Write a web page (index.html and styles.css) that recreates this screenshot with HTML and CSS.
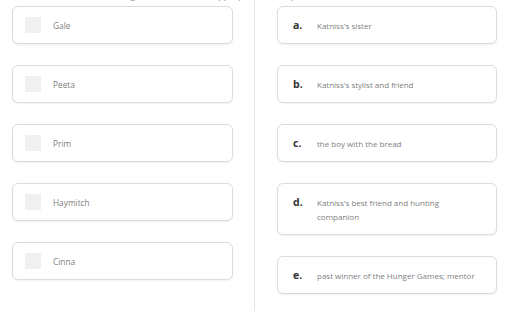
FILE: index.html
```html
<!DOCTYPE html>
<html lang="en">
<head>
    <meta charset="UTF-8">
    <meta name="viewport" content="width=device-width, initial-scale=1.0">
    <title>Match</title>
    <link rel="stylesheet" href="styles.css">
</head>
<body>
    <div class="prompt">Drag each name to the appropriate description.</div>

    <div class="board">
        <div class="column names">
            <div class="card"><span class="box"></span><span class="name">Gale</span></div>
            <div class="card"><span class="box"></span><span class="name">Peeta</span></div>
            <div class="card"><span class="box"></span><span class="name">Prim</span></div>
            <div class="card"><span class="box"></span><span class="name">Haymitch</span></div>
            <div class="card"><span class="box"></span><span class="name">Cinna</span></div>
        </div>

        <div class="divider"></div>

        <div class="column answers">
            <div class="card answer"><span class="letter">a.</span><span class="desc">Katniss's sister</span></div>
            <div class="card answer"><span class="letter">b.</span><span class="desc">Katniss's stylist and friend</span></div>
            <div class="card answer"><span class="letter">c.</span><span class="desc">the boy with the bread</span></div>
            <div class="card answer"><span class="letter">d.</span><span class="desc">Katniss's best friend and hunting companion</span></div>
            <div class="card answer"><span class="letter">e.</span><span class="desc">past winner of the Hunger Games; mentor</span></div>
        </div>
    </div>
</body>
</html>
```

FILE: styles.css
```css
body {
    margin: 0;
    background-color: #fff;
    font-family: 'Open Sans', sans-serif;
    overflow: hidden;
}

.prompt {
    height: 10px;
    overflow: hidden;
    margin-top: -9px;
    margin-bottom: -3px;
    font-size: 9px;
    line-height: 10px;
    color: #888;
    text-align: center;
    padding-right: 80px;
}

.board {
    display: flex;
    height: 313px;
    padding-top: 8px;
    box-sizing: border-box;
}

.column {
    display: flex;
    flex-direction: column;
    gap: 21px;
}

.names {
    width: 221px;
    margin-left: 12px;
}

.answers {
    width: 220px;
    margin-left: 22px;
}

.divider {
    width: 1px;
    background-color: #e4e4e4;
    margin-left: 21px;
    margin-top: -8px;
}

.card {
    display: flex;
    align-items: center;
    min-height: 38px;
    box-sizing: border-box;
    border: 1px solid #dcdcdc;
    border-radius: 6px;
    background-color: #fff;
    box-shadow: 0 1px 2px rgba(0, 0, 0, 0.06);
    padding: 0 12px;
}

.box {
    width: 16px;
    height: 16px;
    background-color: #f0f0f0;
    margin-right: 12px;
    flex-shrink: 0;
}

.name {
    font-size: 8.3px;
    color: #808080;
}

.answer {
    align-items: flex-start;
    padding: 11px 10px 10px 15px;
}

.letter {
    width: 24px;
    flex-shrink: 0;
    font-size: 10.5px;
    font-weight: bold;
    color: #333;
    line-height: 15px;
}

.desc {
    max-width: 162px;
    font-size: 8px;
    line-height: 14px;
    color: #808080;
    padding-top: 1px;
}
```
